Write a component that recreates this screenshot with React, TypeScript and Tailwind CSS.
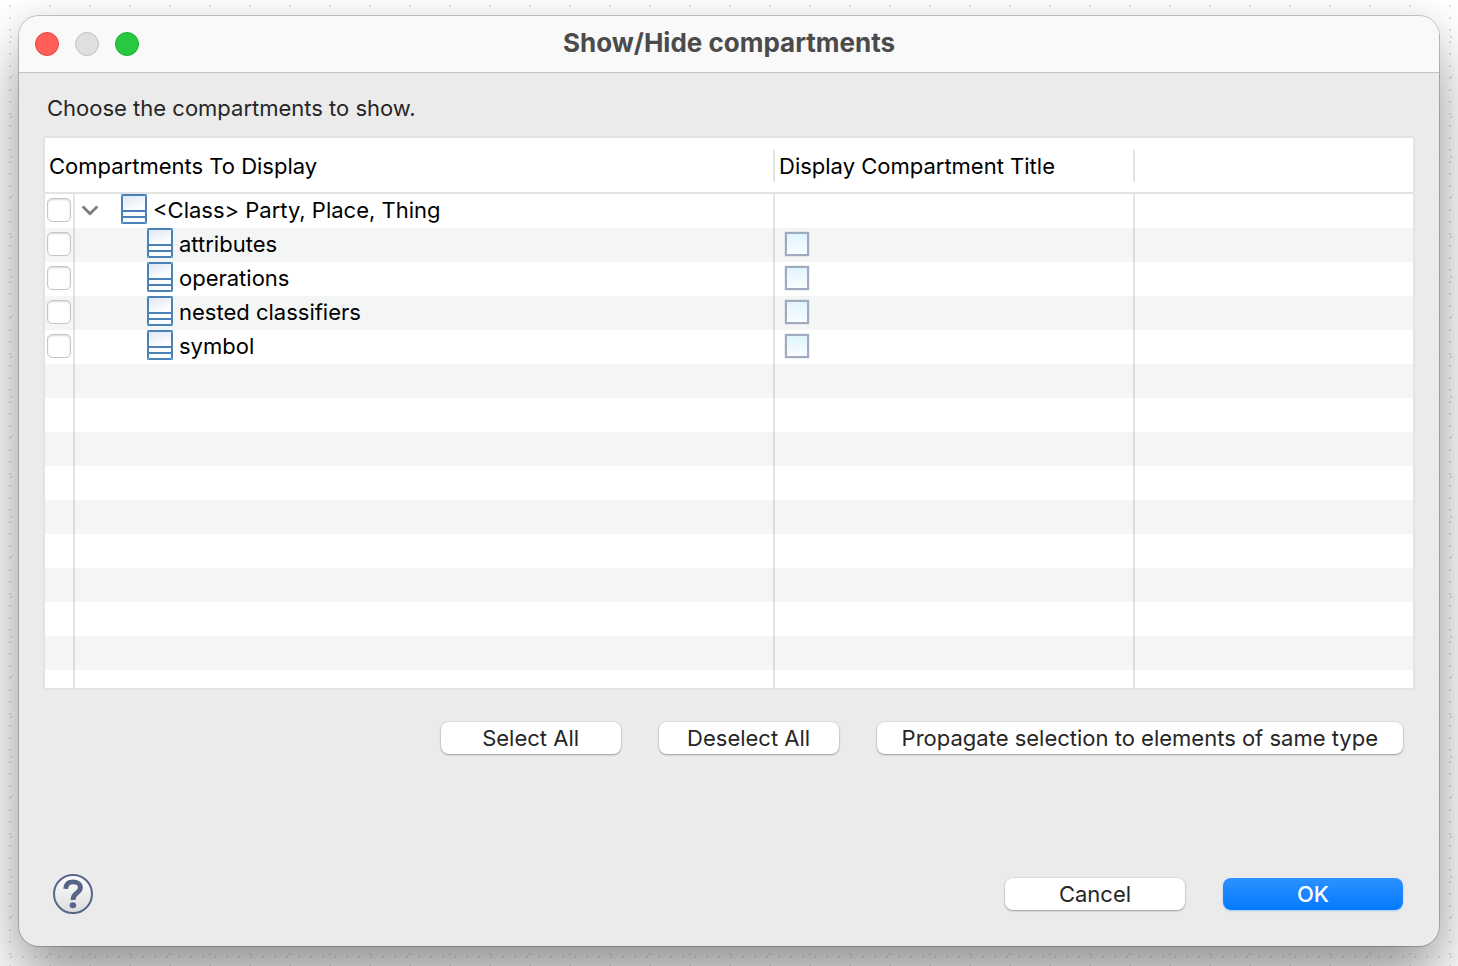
import { useState } from "react";
import type { ReactNode } from "react";

type Compartment = {
  id: string;
  label: string;
  root?: boolean;
};

const compartments: Compartment[] = [
  { id: "class", label: "<Class> Party, Place, Thing", root: true },
  { id: "attributes", label: "attributes" },
  { id: "operations", label: "operations" },
  { id: "nested", label: "nested classifiers" },
  { id: "symbol", label: "symbol" },
];

// empty striped rows below the data, clipped by the list
const fillerRows = Array.from({ length: 60 }, (_, i) => i);

function CompartmentIcon() {
  return (
    <svg width="26" height="30" viewBox="0 0 26 30" className="shrink-0 self-start" aria-hidden="true">
      <defs>
        <linearGradient id="compartment" x1="0" y1="0" x2="0.3" y2="1">
          <stop offset="0" stopColor="#dde6f4" />
          <stop offset="0.6" stopColor="#fbfcfe" />
        </linearGradient>
      </defs>
      <rect x="1" y="1" width="24" height="28" fill="url(#compartment)" stroke="#4a82b8" strokeWidth="2" />
      <path d="M2 17H24M2 23H24" stroke="#4a82b8" strokeWidth="2" />
      <path d="M0 0h2v2h-2zM24 0h2v2h-2zM0 28h2v2h-2zM24 28h2v2h-2z" fill="#6ea3d0" />
    </svg>
  );
}

function CanvasDots() {
  return (
    <svg className="absolute inset-0 h-full w-full" aria-hidden="true">
      <defs>
        <pattern id="dotsY" width="40" height="12" patternUnits="userSpaceOnUse">
          <rect x="9" y="5" width="2" height="2" fill="#e4e4e4" />
        </pattern>
        <pattern id="dotsX" width="12" height="40" patternUnits="userSpaceOnUse">
          <rect x="10" y="36" width="2" height="2" fill="#e4e4e4" />
        </pattern>
      </defs>
      <rect width="100%" height="100%" fill="url(#dotsY)" />
      <rect width="100%" height="100%" fill="url(#dotsX)" />
    </svg>
  );
}

function PushButton({ children, onClick }: { children: ReactNode; onClick?: () => void }) {
  return (
    <button
      type="button"
      onClick={onClick}
      className="h-8 min-w-[180px] rounded-lg bg-white px-[25px] text-[22px] leading-8 text-[#262626] shadow-[0_0_1px_1px_rgba(0,0,0,0.06),0_1px_2px_rgba(0,0,0,0.30)]"
    >
      {children}
    </button>
  );
}

function App() {
  const [shown, setShown] = useState<string[]>([]);
  const [open, setOpen] = useState(true);

  const toggle = (id: string) =>
    setShown((s) => (s.includes(id) ? s.filter((x) => x !== id) : [...s, id]));

  const rows = open ? compartments : compartments.filter((c) => c.root);

  return (
    <div className="relative h-screen overflow-hidden bg-white px-[19px] pt-4 pb-5 font-['Inter',sans-serif] text-[22px] text-black">
      <CanvasDots />
      <section
        role="dialog"
        aria-labelledby="title"
        className="relative flex h-full flex-col rounded-[20px] bg-[#ebebeb] shadow-[0_0_0_1px_rgba(0,0,0,0.2),0_0_30px_rgba(0,0,0,0.08),0_36px_60px_rgba(0,0,0,0.38)]"
      >
        <header className="grid h-[57px] shrink-0 grid-cols-[1fr_auto_1fr] items-center rounded-t-[20px] border-b border-[#c4c4c4] bg-[#f9f9f9] px-4">
          <div className="flex gap-4">
            <button type="button" aria-label="Close" className="size-6 rounded-full border border-[#e2463f] bg-[#ff5f57]" />
            <button type="button" aria-label="Minimize" className="size-6 rounded-full border border-[#c2c2c2] bg-[#dfdfdf]" />
            <button type="button" aria-label="Zoom" className="size-6 rounded-full border border-[#1eae2c] bg-[#28c840]" />
          </div>
          <h1 id="title" className="pb-[2px] text-[26px] leading-8 font-bold text-[#4b4b4b]">
            Show/Hide compartments
          </h1>
        </header>

        <p className="px-7 pt-5 pb-[13px] leading-[30px] text-[#262626]">Choose the compartments to show.</p>

        <div className="mx-6 min-h-0 flex-1 overflow-hidden border-2 border-[#e3e3e3] bg-white">
          <table className="w-full table-fixed border-separate border-spacing-0">
            <colgroup>
              <col className="w-[30px]" />
              <col className="w-[700px]" />
              <col className="w-[360px]" />
              <col />
            </colgroup>
            <thead>
              <tr className="h-14 text-left">
                <th colSpan={2} className="border-b-2 border-[#e3e3e3] p-0 pt-[2px] font-normal">
                  <div className="h-8 border-r-2 border-[#e3e3e3] pl-1 leading-8">Compartments To Display</div>
                </th>
                <th className="border-b-2 border-[#e3e3e3] p-0 pt-[2px] font-normal">
                  <div className="h-8 border-r-2 border-[#e3e3e3] pl-1 leading-8">Display Compartment Title</div>
                </th>
                <th className="border-b-2 border-[#e3e3e3] p-0" />
              </tr>
            </thead>
            <tbody>
              {rows.map((c) => (
                <tr key={c.id} className="h-[34px] even:bg-[#f4f5f5]">
                  <td className="border-r-2 border-black/10 p-0 align-top">
                    <div className="flex h-8 items-center pl-[2px]">
                      <input
                        type="checkbox"
                        id={c.id}
                        checked={shown.includes(c.id)}
                        onChange={() => toggle(c.id)}
                        className="size-6 appearance-none rounded-[5px] border border-[#c6c6c6] bg-white shadow-[inset_0_1px_2px_rgba(0,0,0,0.16)] checked:bg-[#007aff]"
                      />
                    </div>
                  </td>
                  <td className="border-r-2 border-black/10 p-0 align-top">
                    <div className={c.root ? "flex h-8 items-center pl-[7px]" : "flex h-8 items-center pl-[72px]"}>
                      {c.root && (
                        <button
                          type="button"
                          aria-label="Expand"
                          aria-expanded={open}
                          onClick={() => setOpen(!open)}
                          className="mr-[23px]"
                        >
                          <svg width="16" height="12" viewBox="0 0 16 12" fill="none" aria-hidden="true">
                            <path d="M1.5 3.2L8 9.8L14.5 3.2" stroke="#7f7f7f" strokeWidth="2.8" strokeLinecap="round" strokeLinejoin="round" />
                          </svg>
                        </button>
                      )}
                      <CompartmentIcon />
                      <label htmlFor={c.id} className="pl-[6px] leading-8">
                        {c.label}
                      </label>
                    </div>
                  </td>
                  <td className="border-r-2 border-black/10 p-0 align-top">
                    {!c.root && (
                      <div className="flex h-8 items-center pl-[10px]">
                        <input
                          type="checkbox"
                          aria-label={`Display ${c.label} title`}
                          className="size-6 appearance-none border-2 border-[#a1abc0] bg-linear-to-b from-[#e0f4fe] to-[#fafdff] shadow-[0_0_1px_rgba(140,152,180,0.8)] checked:from-[#4a82b8]"
                        />
                      </div>
                    )}
                  </td>
                  <td className="p-0" />
                </tr>
              ))}
              {fillerRows.map((i) => (
                <tr key={i} className="h-[34px] even:bg-[#f4f5f5]">
                  <td className="border-r-2 border-black/10 p-0" />
                  <td className="border-r-2 border-black/10 p-0" />
                  <td className="border-r-2 border-black/10 p-0" />
                  <td className="p-0" />
                </tr>
              ))}
            </tbody>
          </table>
        </div>

        <div className="mt-8 flex justify-end gap-[38px] px-9">
          <PushButton onClick={() => setShown(compartments.map((c) => c.id))}>Select All</PushButton>
          <PushButton onClick={() => setShown([])}>Deselect All</PushButton>
          <PushButton>Propagate selection to elements of same type</PushButton>
        </div>

        <footer className="mt-[120px] flex items-center gap-[38px] pr-9 pb-8 pl-[34px]">
          <button type="button" aria-label="Help" className="mr-auto">
            <svg width="40" height="40" viewBox="0 0 40 40" fill="none" aria-hidden="true">
              <defs>
                <linearGradient id="help" x1="0" y1="0" x2="0" y2="1">
                  <stop offset="0" stopColor="#ffffff" />
                  <stop offset="1" stopColor="#dcdcdc" />
                </linearGradient>
              </defs>
              <circle cx="20" cy="20" r="19" fill="url(#help)" stroke="#566689" strokeWidth="2" />
              <path
                d="M12.7 14.8C13 10.2 15.8 7.8 20 7.8C24.4 7.8 27.4 10 27.4 13.6C27.4 16.4 25.6 17.8 23.6 19.2C21.2 20.8 20 22 20 26"
                stroke="#566689"
                strokeWidth="4.8"
              />
              <ellipse cx="19.9" cy="31.2" rx="3.3" ry="3" fill="#566689" />
            </svg>
          </button>
          <PushButton>Cancel</PushButton>
          <button
            type="button"
            className="h-8 min-w-[180px] rounded-lg bg-linear-to-b from-[#2a91ff] to-[#007aff] px-[25px] leading-8 font-medium text-white shadow-[0_1px_2px_rgba(0,122,255,0.3)]"
          >
            OK
          </button>
        </footer>
      </section>
    </div>
  );
}

export default App;
